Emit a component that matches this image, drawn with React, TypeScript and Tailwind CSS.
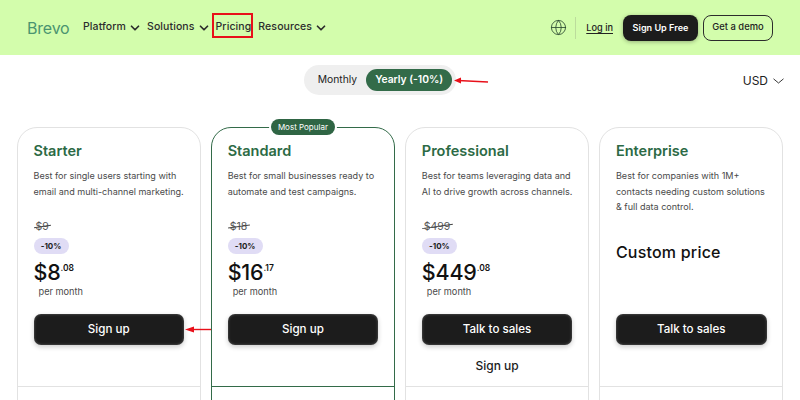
import * as React from "react";
import { ChevronDown, Globe } from "lucide-react";

type Plan = {
  name: string;
  desc: string[];
  old?: string;
  whole?: string;
  cents?: string;
  cta: string;
  second?: string;
  popular?: boolean;
};

const plans: Plan[] = [
  { name: "Starter", desc: ["Best for single users starting with", "email and multi-channel marketing."], old: "$9", whole: "$8", cents: ".08", cta: "Sign up" },
  { name: "Standard", desc: ["Best for small businesses ready to", "automate and test campaigns."], old: "$18", whole: "$16", cents: ".17", cta: "Sign up", popular: true },
  { name: "Professional", desc: ["Best for teams leveraging data and", "AI to drive growth across channels."], old: "$499", whole: "$449", cents: ".08", cta: "Talk to sales", second: "Sign up" },
  { name: "Enterprise", desc: ["Best for companies with 1M+", "contacts needing custom solutions", "& full data control."], cta: "Talk to sales" },
];

function NavItem({ label }: { label: string }) {
  return (
    <div className="flex items-center gap-[2px]">
      <span>{label}</span>
      <ChevronDown size={14} strokeWidth={3} className="mt-[2px]" />
    </div>
  );
}

function Card({ plan }: { plan: Plan }) {
  return (
    <div
      className={
        "relative h-[300px] rounded-t-[20px] border " +
        (plan.popular ? "border-[#336b49]" : "border-[#e2e2e2] border-[1.5px]")
      }
    >
      {plan.popular && (
        <div className="absolute left-1/2 top-[-9px] -translate-x-1/2 rounded-full bg-white px-[2px]">
          <div className="flex h-[16px] w-[64px] items-center justify-center rounded-full bg-[#2f6544] text-[8px] text-white">
            Most Popular
          </div>
        </div>
      )}
      <div
        className={
          "flex h-[259px] flex-col border-b px-[15.5px] pt-[13px] " +
          (plan.popular ? "border-[#336b49]" : "border-[#e2e2e2] border-b-[1.5px]")
        }
      >
        <h3 className="text-[14.5px] font-semibold leading-[20px] text-[#2c6a45]">{plan.name}</h3>
        <div className="mt-[7px] h-[47px] text-[9.05px] leading-[15.5px] text-[#4a4a4a]">
          {plan.desc.map((l) => (
            <div key={l} className="whitespace-nowrap">{l}</div>
          ))}
        </div>
        {plan.whole ? (
          <div className="mt-[4px] h-[86px]">
            <div className="relative ml-[2px] h-[15px] w-fit text-[10.5px] leading-[15px] text-[#555]">
              <span>{plan.old}</span>
              <span className="absolute left-[-2px] right-[-2px] top-[7px] h-px -rotate-[8deg] bg-[#444]" />
            </div>
            <div className="mt-[4px] flex h-[16px] w-[35px] items-center justify-center rounded-full bg-[#e0dcf5] text-[8px] font-bold text-[#222]">
              -10%
            </div>
            <div className="mt-[3px] flex h-[30px] items-start text-[#111]">
              <span className="text-[21.5px] font-medium leading-[30px] tracking-[-0.2px]">{plan.whole}</span>
              <span className="mt-[5px] text-[8.5px] font-semibold leading-[12px]">{plan.cents}</span>
            </div>
            <div className="ml-[5px] mt-[-2px] text-[9.2px] leading-[14px] text-[#4a4a4a]">per month</div>
          </div>
        ) : (
          <div className="mt-[4px] h-[86px]">
            <div className="mt-[22px] text-[16px] font-medium leading-[22px] tracking-[0.2px] text-[#111]">Custom price</div>
          </div>
        )}
        <button className="mt-[9px] h-[31px] w-full rounded-[7px] bg-[#1c1c1c] text-[11.6px] font-medium text-white shadow-[0_2px_5px_rgba(0,0,0,0.2),inset_0_0_3px_rgba(255,255,255,0.3)]">
          {plan.cta}
        </button>
        {plan.second && <div className="mt-[12px] text-center text-[12px] font-medium leading-[18px] text-[#1c1c1c]">{plan.second}</div>}
      </div>
    </div>
  );
}

export default function App() {
  return (
    <div className="relative h-[400px] w-[800px] overflow-hidden bg-white font-['Inter',sans-serif]">
      <header className="flex h-[55px] items-center bg-[#d3fdac] pl-[27px] pr-[27px]">
        <span className="w-[56px] text-[16px] leading-none tracking-[-0.2px] text-[#4a9470]">Brevo</span>
        <nav className="mb-[2px] flex items-center gap-[5px] text-[10.5px] font-medium tracking-[0.1px] text-[#2c2c2c]">
          <NavItem label="Platform" />
          <NavItem label="Solutions" />
          <span className="mr-[2px]">Pricing</span>
          <NavItem label="Resources" />
        </nav>
        <div className="ml-auto flex items-center">
          <Globe size={17} strokeWidth={1.2} className="text-[#2c4a32]" />
          <div className="mx-[8px] h-[22px] w-px bg-[#bcdc9c]" />
          <span className="ml-[2px] text-[9.2px] font-medium text-[#222] underline underline-offset-2">Log in</span>
          <button className="ml-[10px] flex h-[26px] w-[75px] items-center justify-center rounded-[8px] bg-[#1c1c1c] text-[9.1px] font-semibold text-white shadow-[0_1px_4px_rgba(0,0,0,0.3)]">
            Sign Up Free
          </button>
          <button className="ml-[5px] flex h-[26px] w-[70px] items-center justify-center rounded-[8px] border border-[#2c2c2c] text-[9.4px] font-medium text-[#222]">
            Get a demo
          </button>
        </div>
      </header>

      <div className="relative flex h-[72px] items-start justify-center pr-[40px] pt-[10px]">
        <div className="flex h-[30px] items-center rounded-full bg-[#efefef] pl-[14px] pr-[4px] text-[10.3px]">
          <span className="mr-[9px] font-normal text-[#222]">Monthly</span>
          <span className="flex h-[22px] w-[86px] items-center justify-center rounded-full bg-[#336b49] font-semibold text-white">
            Yearly (-10%)
          </span>
        </div>
        <div className="absolute right-[16px] top-[17px] flex items-center gap-[5px] text-[12px] text-[#222]">
          USD
          <svg width="11" height="6" viewBox="0 0 11 6" fill="none" stroke="#222" strokeWidth="0.9">
            <path d="M0.5 0.8 L5.5 5 L10.5 0.8" />
          </svg>
        </div>
      </div>

      <div className="grid grid-cols-4 gap-[10.6px] px-[17px]">
        {plans.map((p) => (
          <Card key={p.name} plan={p} />
        ))}
      </div>

      {/* красные пометки поверх скриншота */}
      <div className="absolute left-[212px] top-[13px] h-[25px] w-[41px] border-2 border-[#e8101a]" />
      <svg className="absolute left-0 top-0" width="800" height="400" fill="none">
        <path d="M488 82 L458 80.5" stroke="#e8101a" strokeWidth="1.4" />
        <path d="M454 80.5 L461 77.5 L461 83.5 Z" fill="#e8101a" />
        <path d="M211 329.5 L190 329.5" stroke="#e8101a" strokeWidth="1.4" />
        <path d="M185 329.5 L194 326.5 L194 332.5 Z" fill="#e8101a" />
      </svg>
    </div>
  );
}
